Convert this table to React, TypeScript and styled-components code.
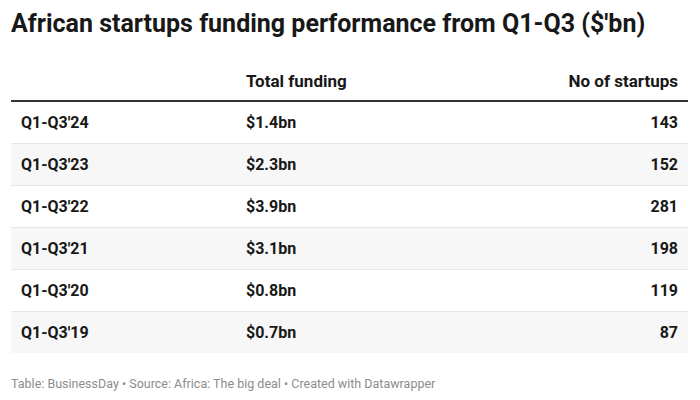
import React from 'react';
import styled, { createGlobalStyle } from 'styled-components';

type Row = {
  period: string;
  funding: string;
  startups: number;
};

const rows: Row[] = [
  { period: "Q1-Q3'24", funding: '$1.4bn', startups: 143 },
  { period: "Q1-Q3'23", funding: '$2.3bn', startups: 152 },
  { period: "Q1-Q3'22", funding: '$3.9bn', startups: 281 },
  { period: "Q1-Q3'21", funding: '$3.1bn', startups: 198 },
  { period: "Q1-Q3'20", funding: '$0.8bn', startups: 119 },
  { period: "Q1-Q3'19", funding: '$0.7bn', startups: 87 },
];

const GlobalStyle = createGlobalStyle`
  body {
    margin: 0;
    background: #ffffff;
    font-family: Roboto, "Liberation Sans", sans-serif;
    color: #181818;
  }
`;

export default function App() {
  return (
    <>
      <GlobalStyle />
      <Chart>
        <Title>African startups funding performance from Q1-Q3 ($'bn)</Title>
        <Table>
          <colgroup>
            <col style={{ width: 225 }} />
            <col style={{ width: 250 }} />
            <col />
          </colgroup>
          <thead>
            <tr>
              <HeadCell />
              <HeadCell>Total funding</HeadCell>
              <HeadCell align="right">No of startups</HeadCell>
            </tr>
          </thead>
          <tbody>
            {rows.map((row, i) => (
              <BodyRow key={row.period} striped={i % 2 === 1}>
                <Cell>{row.period}</Cell>
                <Cell>{row.funding}</Cell>
                <Cell align="right">{row.startups}</Cell>
              </BodyRow>
            ))}
          </tbody>
        </Table>
        <Notes>Table: BusinessDay • Source: Africa: The big deal • Created with Datawrapper</Notes>
      </Chart>
    </>
  );
}

const Chart = styled.div`
  padding: 9px 12px 0 11px;
`;

const Title = styled.h1`
  margin: 0 0 32px;
  font-size: 25px;
  line-height: 30px;
  font-weight: 700;
  color: #181818;
`;

const Table = styled.table`
  width: 677px;
  table-layout: fixed;
  border-collapse: collapse;
  font-size: 16px;
  font-weight: 700;
`;

const HeadCell = styled.th<{ align?: 'left' | 'right' }>`
  text-align: ${(p) => p.align ?? 'left'};
  padding: 0 10px 9px;
  font-size: 17px;
  line-height: 20px;
  vertical-align: bottom;
  border-bottom: 2px solid #333333;
  font-weight: 700;
`;

const BodyRow = styled.tr<{ striped: boolean }>`
  height: 42px;
  background: ${(p) => (p.striped ? '#f7f7f7' : '#ffffff')};
  border-bottom: 1px solid #e6e6e6;
  &:last-child { border-bottom: none; }
`;

const Cell = styled.td<{ align?: 'left' | 'right' }>`
  text-align: ${(p) => p.align ?? 'left'};
  padding: 0 10px;
  vertical-align: middle;
`;

const Notes = styled.div`
  margin-top: 23px;
  font-size: 12.5px;
  line-height: 16px;
  font-weight: 400;
  color: #8c8c8c;
`;
